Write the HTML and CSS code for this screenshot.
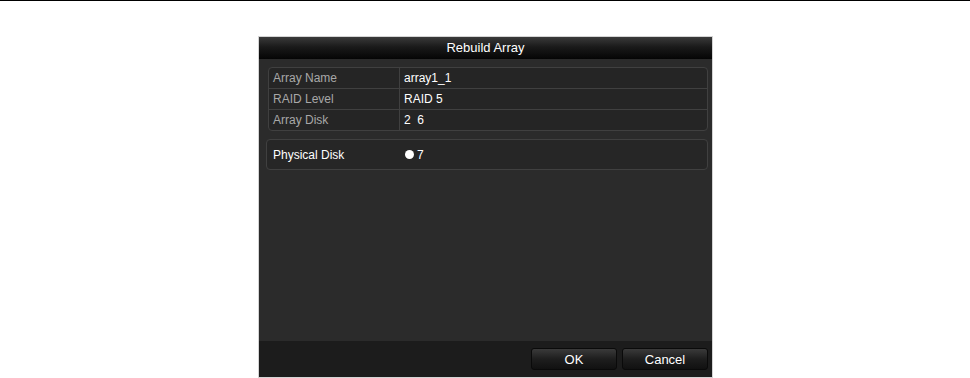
FILE: index.html
```html
<!DOCTYPE html>
<html lang="en">
<head>
  <meta charset="UTF-8" />
  <title>Rebuild Array</title>
  <link rel="stylesheet" href="styles.css">
</head>
<body>
  <div class="top-rule"></div>
  <div class="dialog">
    <div class="dialog-title">Rebuild Array</div>
    <div class="dialog-body">
      <div class="info-table">
        <div class="info-row">
          <div class="info-label">Array Name</div>
          <div class="info-value">array1_1</div>
        </div>
        <div class="info-row">
          <div class="info-label">RAID Level</div>
          <div class="info-value">RAID 5</div>
        </div>
        <div class="info-row">
          <div class="info-label">Array Disk</div>
          <div class="info-value">2&nbsp;&nbsp;6</div>
        </div>
      </div>
      <div class="disk-box">
        <div class="disk-label">Physical Disk</div>
        <label class="disk-option"><span class="radio"></span>7</label>
      </div>
    </div>
    <div class="dialog-footer">
      <button class="btn">OK</button>
      <button class="btn">Cancel</button>
    </div>
  </div>
</body>
</html>
```

FILE: styles.css
```css
body {
  margin: 0;
  background: #fff;
  font-family: "Liberation Sans", Arial, sans-serif;
  font-size: 12px;
}
.top-rule {
  height: 1px;
  background: #000;
}
.dialog {
  width: 453px;
  margin: 35px 0 0 258px;
  border: 1px solid #d4d4d4;
  background: #2b2b2b;
}
.dialog-title {
  height: 22px;
  line-height: 21px;
  text-align: center;
  color: #fff;
  font-size: 13px;
  background: linear-gradient(#3a3a3a, #1a1a1a 45%, #050505);
}
.dialog-body {
  height: 282px;
  padding: 8px 4px 0 9px;
  box-sizing: border-box;
}
.info-table {
  border: 1px solid #404040;
  border-radius: 4px;
  background: #252525;
}
.info-row {
  display: grid;
  grid-template-columns: 131px 1fr;
  height: 20px;
  line-height: 20px;
}
.info-row + .info-row {
  border-top: 1px solid #404040;
}
.info-label {
  padding-left: 4px;
  color: #a8a8a8;
  border-right: 1px solid #404040;
}
.info-value {
  padding-left: 4px;
  color: #fff;
}
.disk-box {
  display: flex;
  align-items: center;
  height: 29px;
  margin: 8px 0 0 -2px;
  padding-left: 6px;
  border: 1px solid #404040;
  border-radius: 4px;
  background: #262626;
  color: #fff;
}
.disk-label {
  width: 132px;
}
.disk-option {
  display: flex;
  align-items: center;
  gap: 3px;
}
.radio {
  width: 9px;
  height: 9px;
  border-radius: 50%;
  background: #fff;
}
.dialog-footer {
  display: flex;
  justify-content: flex-end;
  gap: 5px;
  height: 36px;
  padding: 7px 4px 0 0;
  box-sizing: border-box;
  background: #1c1c1c;
}
.btn {
  width: 86px;
  height: 22px;
  padding: 0;
  border: 1px solid #0a0a0a;
  border-radius: 3px;
  background: linear-gradient(#3a3a3a, #1e1e1e 50%, #111);
  color: #fff;
  font-family: "Liberation Sans", Arial, sans-serif;
  font-size: 13px;
}
```
